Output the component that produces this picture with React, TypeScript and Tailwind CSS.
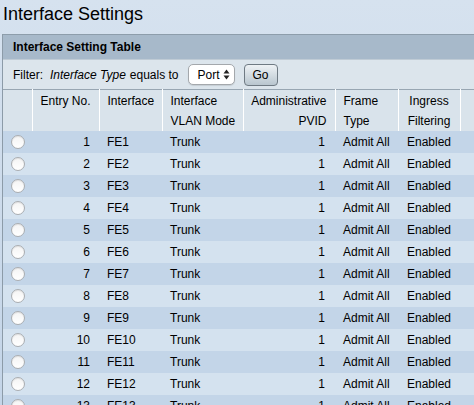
import React from "react";

type Row = { entry: number; iface: string; mode: string; pvid: number; frame: string; ingress: string };

const rows: Row[] = Array.from({ length: 14 }, (_, i) => ({
  entry: i + 1,
  iface: `FE${i + 1}`,
  mode: "Trunk",
  pvid: 1,
  frame: "Admit All",
  ingress: "Enabled",
}));

function Radio() {
  return (
    <span className="inline-block w-[14px] h-[14px] rounded-full border border-[#a9adb1] bg-gradient-to-b from-[#f4f4f4] to-white shadow-[inset_0_1px_1px_rgba(0,0,0,0.08)] align-middle" />
  );
}

export default function App() {
  return (
    <div
      className="w-[474px] h-[405px] overflow-hidden bg-gradient-to-b from-[#d6e2ef] to-[#c4d5e8] text-[12px] text-black"
      style={{ fontFamily: '"Liberation Sans", Arial, sans-serif' }}
    >
      {/* page title */}
      <div className="h-[34px] pl-[3px] pt-[3px] text-[18px] leading-[22px]">Interface Settings</div>

      {/* panel */}
      <div className="ml-[2px] w-[600px] border-l border-[#8c9ba8]">
        <div className="h-[25px] border-t border-[#8d9dab] bg-[#a7b9ca] pl-[10px] flex items-center font-bold text-[12px]">
          Interface Setting Table
        </div>
        <div className="h-[30px] border-t border-[#bfcbd5] bg-[#dce5ec] flex items-center pl-[10px]">
          <span>Filter:</span>
          <span className="ml-[7px] italic">Interface Type</span>
          <span className="ml-[4px]">equals to</span>
          <span className="ml-[9px] h-[21px] w-[47px] rounded-[5px] border border-[#a4a8ac] bg-white flex items-center justify-between pl-[9px] pr-[4px] shadow-[0_1px_1px_rgba(0,0,0,0.1)]">
            <span>Port</span>
            <svg width="7" height="11" viewBox="0 0 7 11">
              <path d="M3.5 0.5 L6.5 4.5 H0.5 Z" fill="#222" />
              <path d="M3.5 10.5 L6.5 6.5 H0.5 Z" fill="#222" />
            </svg>
          </span>
          <button
            type="button"
            className="ml-[9px] h-[22px] w-[34px] rounded-[4px] border border-[#6f7a83] bg-gradient-to-b from-[#eef2f5] to-[#b9c6cf] text-[12px] leading-none"
          >
            Go
          </button>
        </div>

        <table className="border-collapse table-fixed w-[600px]">
          <colgroup>
            <col className="w-[29px]" />
            <col className="w-[67px]" />
            <col className="w-[63px]" />
            <col className="w-[81px]" />
            <col className="w-[92px]" />
            <col className="w-[63px]" />
            <col className="w-[62px]" />
            <col />
          </colgroup>
          <thead>
            <tr className="bg-[#d9e3eb] border-t border-[#98a6b2] align-top leading-[20px] font-normal">
              <th className="h-[41px] font-normal" />
              <th className="border-l border-white font-normal text-right pr-[8px] pt-[1px]">Entry No.</th>
              <th className="border-l border-white font-normal text-left pl-[8px] pt-[1px]">Interface</th>
              <th className="border-l border-white font-normal text-left pl-[8px] pt-[1px]">
                Interface
                <br />
                VLAN Mode
              </th>
              <th className="border-l border-white font-normal text-right pr-[8px] pt-[1px]">
                Administrative
                <br />
                PVID
              </th>
              <th className="border-l border-white font-normal text-left pl-[8px] pt-[1px]">
                Frame
                <br />
                Type
              </th>
              <th className="border-l border-white font-normal text-center pt-[1px]">
                Ingress
                <br />
                Filtering
              </th>
              <th className="border-l border-white font-normal" />
            </tr>
          </thead>
          <tbody>
            {rows.map((r, i) => (
              <tr key={r.entry} className={i % 2 === 0 ? "bg-[#c3d5e8] h-[22px]" : "bg-[#d4e2ef] h-[22px]"}>
                <td className="text-center p-0 leading-none">
                  <Radio />
                </td>
                <td className="text-right pr-[9px]">{r.entry}</td>
                <td className="pl-[8px]">{r.iface}</td>
                <td className="pl-[8px]">{r.mode}</td>
                <td className="text-right pr-[10px]">{r.pvid}</td>
                <td className="pl-[8px]">{r.frame}</td>
                <td className="text-center">{r.ingress}</td>
                <td />
              </tr>
            ))}
          </tbody>
        </table>
      </div>
    </div>
  );
}
